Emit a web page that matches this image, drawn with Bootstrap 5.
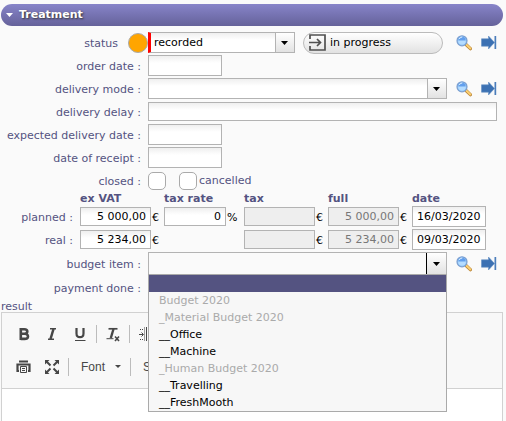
<!DOCTYPE html>
<html lang="en">
<head>
<meta charset="utf-8">
<meta name="viewport" content="width=device-width, initial-scale=1">
<title>Treatment</title>
<link href="https://cdn.jsdelivr.net/npm/bootstrap@5.3.0/dist/css/bootstrap.min.css" rel="stylesheet">
<style>
:root { --ink: #545381; --line: #b3b3b3; --label-w: 148px; }
body { background: #fafafa; color: var(--ink); font: 11px/14px Verdana, "DejaVu Sans", sans-serif; }
.panel-title { height: 22px; margin: 4px 3px 5px 1px; padding: 0 5px; border: 0; border-radius: 11px; gap: 6px; color: #fff; font-weight: 700; text-align: left; text-shadow: 1px 1px 2px #333; background: linear-gradient(#8784c9, #65629a); }
.line { height: 23px; padding-right: 9px; }
.line-label { width: var(--label-w); padding: 3px 7px 0 0; text-align: right; flex: none; white-space: nowrap; }
.status-label { padding: 3px 10px 0 0; }
.field { height: 21px; padding: 0 4px; border: 1px solid var(--line); border-radius: 0; color: #000; background: linear-gradient(#efefef, #fff 7px); min-width: 0; }
.field-date { width: 74px; }
.field-low { height: 19px; }
.pick { appearance: none; padding: 0 24px 0 6px;
  background: url("data:image/svg+xml,%3Csvg xmlns='http://www.w3.org/2000/svg' viewBox='0 0 7 4'%3E%3Cpath d='M0 0h7L3.500 4z'/%3E%3C/svg%3E") right 6px center / 7px 4px no-repeat,
    linear-gradient(#fff, #e2e2e2) right / 18px 100% no-repeat,
    linear-gradient(var(--line), var(--line)) right 18px top / 1px 100% no-repeat,
    linear-gradient(#efefef, #fff 7px); }
.pick-required { border-left: 3px solid #f00; width: 147px; padding-left: 3px; }
.pick-open { height: 23px; background: url("data:image/svg+xml,%3Csvg xmlns='http://www.w3.org/2000/svg' viewBox='0 0 7 4'%3E%3Cpath d='M0 0h7L3.500 4z'/%3E%3C/svg%3E") right 6px center / 7px 4px no-repeat,
    linear-gradient(#fff, #e2e2e2) right / 19px 100% no-repeat,
    linear-gradient(#000, #000) right 19px top / 1px 100% no-repeat, #fafafa; }
.dot { width: 20px; height: 20px; border: 1px solid #aaa; border-radius: 50%; background: #ffa500; }
.next-step { width: 140px; height: 22px; padding: 0 5px; border: 1px solid #bbb; border-radius: 11px; background: linear-gradient(#fff, #e2e2e2); color: #000; }
.tools { gap: 9px; margin-left: 9px; }
.tools button, .editor button { border: 0; padding: 0; background: none; line-height: 0; color: #474747; }
.tick { appearance: none; width: 18px; height: 18px; margin: 0; border: 1px solid #aaa; border-radius: 5px; background: #fff; }
.tick-next { margin-left: 13px; }
.tick-label { padding-left: 2px; }
.amounts { table-layout: fixed; width: 100%; }
.amounts th, .amounts td { padding: 0; white-space: nowrap; }
.amounts thead th { height: 13px; line-height: 13px; font-weight: 700; }
.amounts tbody tr { height: 23px; }
.amounts tbody th { font-weight: 400; text-align: right; padding: 2px 7px 0 0; }
.amounts .unit { color: #000; padding: 2px 0 0 1px; }
.sum { width: 71px; text-align: right; }
.rate { width: 62px; text-align: right; }
.field:disabled { background: #eee; color: #777; }
.c-name { width: 80px; } .c-sum { width: 84px; } .c-rate { width: 80px; }
.budget-line { height: 25px; }
.options { top: 100%; left: 0; right: 0; margin: -1px 0 0; padding: 0; border: 1px solid #aaa; border-radius: 0; background: #f7f7f7; z-index: 5; }
.options li { height: 17px; line-height: 18px; padding-left: 10px; color: #000; white-space: nowrap; }
.options .chosen { background: #545381; }
.options .off { color: #aaa; }
.result-label { height: 13px; line-height: 15px; margin-left: 1px; }
.editor { margin: 0 3px 0 1px; border: 1px solid #d1d1d1; border-bottom: 0; background: #fff; }
.editor-bar { background: #f8f8f8; border-bottom: 1px solid #d1d1d1; padding: 4px 8px 5px; }
.editor-row { height: 33px; }
.editor .key { width: 28px; height: 28px; }
.sep { width: 1px; height: 18px; background: #bcbcbc; margin: 0 2px; }
.editor .combo { font: 12px/28px "Liberation Sans", Arial, sans-serif; padding: 0 7px 0 10px; gap: 10px; color: #474747; }
.writing { color: #000; padding: 8px; }
</style>
<script src="https://cdn.jsdelivr.net/npm/bootstrap@5.3.0/dist/js/bootstrap.bundle.min.js"></script>
</head>
<body class="d-flex flex-column vh-100 overflow-hidden">
<svg class="d-none" xmlns="http://www.w3.org/2000/svg">
  <defs>
    <symbol id="search" viewBox="0 0 16 16"><path d="M10 9.500l4.400 4.200" stroke="#b88234" stroke-width="3.200" stroke-linecap="round"/><path d="M10.500 9.700l3.900 3.700" stroke="#fbd073" stroke-width="2" stroke-linecap="round"/><circle cx="6" cy="5.800" r="5" fill="#7fbdf5" stroke="#7d9fcf" stroke-width="1.200"/><circle cx="6" cy="5.800" r="3.900" fill="#b5dcff"/><path d="M2.300 5.500a3.700 3.700 0 0 1 7.400 0z" fill="#629fed"/><path d="M3.300 4a3 3 0 0 1 3-2" stroke="#e5f4ff" fill="none"/></symbol>
    <symbol id="goto" viewBox="0 0 16 16"><path d="M.5 3.800h7V1l6 6.500-6 6.500v-2.800h-7z" fill="#3c71b3" stroke="#6792c5" stroke-width=".6"/><path d="M13.500 1h1.700v13h-1.700z" fill="#4a7dbb"/></symbol>
  </defs>
</svg>

<button type="button" class="panel-title d-flex align-items-center flex-shrink-0">
  <svg width="7" height="4" viewBox="0 0 7 4" aria-hidden="true"><path d="M0 0h7L3.500 4z" fill="#fff"/></svg>
  <span>Treatment</span>
</button>

<form class="flex-shrink-0">
  <div class="line d-flex align-items-center">
    <div class="line-label d-flex align-items-center justify-content-end p-0">
      <label for="status" class="status-label">status</label><span class="dot"></span>
    </div>
    <select id="status" class="field pick pick-required"><option>recorded</option></select>
    <button type="button" class="next-step d-flex align-items-center ms-2">
      <svg width="17" height="17" viewBox="0 0 17 17" fill="none" stroke="#505050" stroke-width="1.700" aria-hidden="true"><path d="M1 5V1h15v15H1v-4M0 8.500h11M8 5l3.500 3.500L8 12"/></svg>
      <span class="ps-1">in progress</span>
    </button>
    <div class="tools d-flex ms-auto">
      <button type="button" aria-label="Search status"><svg width="16" height="16"><use href="#search"/></svg></button>
      <button type="button" aria-label="Go to status"><svg width="16" height="16"><use href="#goto"/></svg></button>
    </div>
  </div>
  <div class="line d-flex align-items-center">
    <label for="ordered" class="line-label">order date :</label>
    <input id="ordered" class="field field-date">
  </div>
  <div class="line d-flex align-items-center">
    <label for="mode" class="line-label">delivery mode :</label>
    <select id="mode" class="field pick flex-grow-1"><option></option></select>
    <div class="tools d-flex">
      <button type="button" aria-label="Search delivery mode"><svg width="16" height="16"><use href="#search"/></svg></button>
      <button type="button" aria-label="Go to delivery mode"><svg width="16" height="16"><use href="#goto"/></svg></button>
    </div>
  </div>
  <div class="line d-flex align-items-center">
    <label for="delay" class="line-label">delivery delay :</label>
    <input id="delay" class="field field-low flex-grow-1">
  </div>
  <div class="line d-flex align-items-center">
    <label for="expected" class="line-label">expected delivery date :</label>
    <input id="expected" class="field field-date">
  </div>
  <div class="line d-flex align-items-center">
    <label for="receipt" class="line-label">date of receipt :</label>
    <input id="receipt" class="field field-date">
  </div>
  <div class="line d-flex align-items-center">
    <label for="closed" class="line-label">closed :</label>
    <input id="closed" type="checkbox" class="tick">
    <input id="cancelled" type="checkbox" class="tick tick-next">
    <label for="cancelled" class="tick-label">cancelled</label>
  </div>

  <table class="amounts">
    <colgroup><col class="c-name"><col class="c-sum"><col class="c-rate"><col class="c-sum"><col class="c-sum"><col></colgroup>
    <thead>
      <tr><td></td><th scope="col">ex VAT</th><th scope="col">tax rate</th><th scope="col">tax</th><th scope="col">full</th><th scope="col">date</th></tr>
    </thead>
    <tbody>
      <tr>
        <th scope="row">planned :</th>
        <td><div class="d-flex align-items-center"><input class="field field-low sum" aria-label="Planned ex VAT" value="5 000,00"><span class="unit">€</span></div></td>
        <td><div class="d-flex align-items-center"><input class="field field-low rate" aria-label="Tax rate" value="0"><span class="unit">%</span></div></td>
        <td><div class="d-flex align-items-center"><input class="field field-low sum" aria-label="Planned tax" disabled><span class="unit">€</span></div></td>
        <td><div class="d-flex align-items-center"><input class="field field-low sum" aria-label="Planned full" value="5 000,00" disabled><span class="unit">€</span></div></td>
        <td><input class="field field-date d-block" aria-label="Planned date" value="16/03/2020"></td>
      </tr>
      <tr>
        <th scope="row">real :</th>
        <td><div class="d-flex align-items-center"><input class="field field-low sum" aria-label="Real ex VAT" value="5 234,00"><span class="unit">€</span></div></td>
        <td></td>
        <td><div class="d-flex align-items-center"><input class="field field-low sum" aria-label="Real tax" disabled><span class="unit">€</span></div></td>
        <td><div class="d-flex align-items-center"><input class="field field-low sum" aria-label="Real full" value="5 234,00" disabled><span class="unit">€</span></div></td>
        <td><input class="field field-date d-block" aria-label="Real date" value="09/03/2020"></td>
      </tr>
    </tbody>
  </table>

  <div class="line budget-line d-flex align-items-center">
    <label for="budget" class="line-label">budget item :</label>
    <div class="position-relative flex-grow-1 d-flex">
      <select id="budget" class="field pick pick-open w-100"><option></option></select>
      <ul class="options list-unstyled position-absolute" role="listbox" aria-label="Budget items">
        <li class="chosen" role="option" aria-selected="true"></li>
        <li class="off" role="option">Budget 2020</li>
        <li class="off" role="option">_Material Budget 2020</li>
        <li role="option">__Office</li>
        <li role="option">__Machine</li>
        <li class="off" role="option">_Human Budget 2020</li>
        <li role="option">__Travelling</li>
        <li role="option">__FreshMooth</li>
      </ul>
    </div>
    <div class="tools d-flex">
      <button type="button" aria-label="Search budget item"><svg width="16" height="16"><use href="#search"/></svg></button>
      <button type="button" aria-label="Go to budget item"><svg width="16" height="16"><use href="#goto"/></svg></button>
    </div>
  </div>
  <div class="line d-flex align-items-center">
    <label for="paid" class="line-label">payment done :</label>
    <input id="paid" type="checkbox" class="tick">
  </div>
</form>

<div class="result-label flex-shrink-0" id="result-label">result</div>
<div class="editor flex-grow-1">
  <div class="editor-bar" role="toolbar" aria-label="Formatting">
    <div class="editor-row d-flex align-items-center">
      <button type="button" class="key" aria-label="Bold"><svg width="16" height="16" viewBox="0 0 16 16" fill="none" stroke="currentColor" stroke-width="2.600"><path d="M4.800 3.200h3.500q3 0 3 2.300t-3 2.300H4.800m3.500 0q3.700 0 3.700 2.600t-3.700 2.500H4.800M4.800 2v12"/></svg></button>
      <button type="button" class="key" aria-label="Italic"><svg width="16" height="16" viewBox="0 0 16 16" fill="none" stroke="currentColor"><path d="M6 2.800h6M4 13.200h6" stroke-width="1.600"/><path d="M9.500 3L6.500 13" stroke-width="2.500"/></svg></button>
      <button type="button" class="key" aria-label="Underline"><svg width="16" height="16" viewBox="0 0 16 16" fill="none" stroke="currentColor"><path d="M4.500 2v5.500q0 3.700 3.500 3.700t3.500-3.700V2" stroke-width="2.200"/><path d="M3 14.500h10.500"/></svg></button>
      <span class="sep"></span>
      <button type="button" class="key" aria-label="Remove format"><svg width="16" height="16" viewBox="0 0 16 16" fill="none" stroke="currentColor"><path d="M3.500 2.800h9" stroke-width="1.700"/><path d="M8.500 3L5.800 12" stroke-width="2.400"/><path d="M1.500 12.700h7"/><path d="M10 10.500l4 4.500m0-4.500L10 15" stroke-width="1.600"/></svg></button>
      <span class="sep"></span>
      <button type="button" class="key" aria-label="Page break"><svg width="16" height="16" viewBox="0 0 16 16" fill="none" stroke="currentColor"><path d="M1 8.500h4M3.500 6.500l2 2-2 2"/><path d="M6.500 1.500v14" stroke-dasharray="1 1"/><path d="M8.500 1v14"/><path d="M10 3.500h6M10 6.500h6M10 9.500h6M10 12.500h6M2 3.500h4M2 13.500h4" stroke-dasharray="1 1"/></svg></button>
    </div>
    <div class="editor-row d-flex align-items-center">
      <button type="button" class="key" aria-label="Print"><svg width="16" height="16" viewBox="0 0 16 16" fill="none" stroke="currentColor"><path d="M3 2.500h9" stroke-width="2"/><path d="M3 12H1.500V5.500h12V12H12" stroke-width="2.200"/><path d="M4.500 7.500h6v6h-6zM6 9.500h3M6 11.500h3" fill="#f8f8f8"/></svg></button>
      <button type="button" class="key" aria-label="Maximize"><svg width="16" height="16" viewBox="0 0 16 16" fill="currentColor" stroke="currentColor"><path d="M1 1h4.500L1 5.500zM15 1v4.500L10.500 1zM1 15v-4.500L5.500 15zM15 15h-4.500l4.500-4.500z" stroke="none"/><path d="M2 2l4.500 4.500M14 2L9.500 6.500M2 14l4.500-4.500M14 14L9.500 9.500" stroke-width="2"/></svg></button>
      <span class="sep"></span>
      <button type="button" class="combo d-flex align-items-center">Font<svg width="6" height="3" viewBox="0 0 6 3" aria-hidden="true"><path d="M0 0h6L3 3z" fill="currentColor"/></svg></button>
      <span class="sep"></span>
      <button type="button" class="combo" aria-label="Size">S</button>
    </div>
  </div>
  <div class="writing" contenteditable="true" role="textbox" aria-labelledby="result-label"></div>
</div>
</body>
</html>
